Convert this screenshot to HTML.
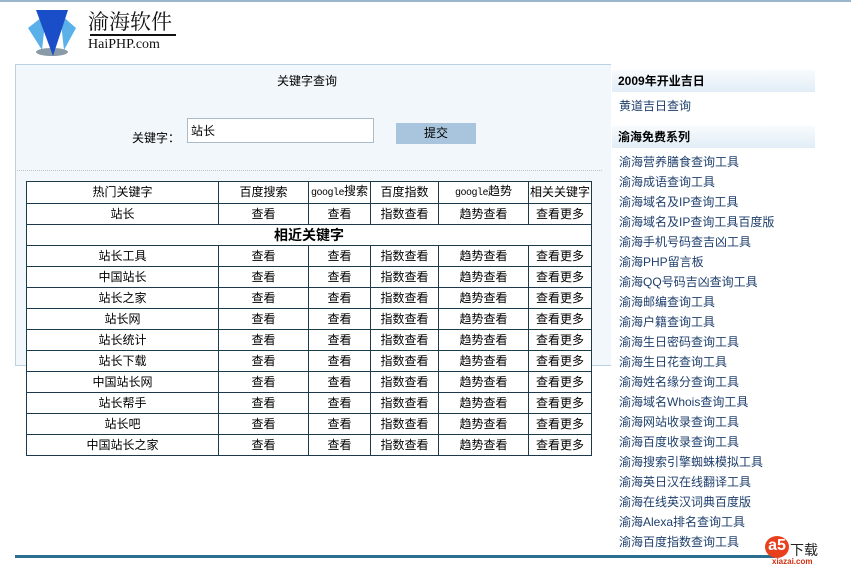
<!DOCTYPE html>
<html><head><meta charset="utf-8">
<style>
*{margin:0;padding:0;box-sizing:border-box}
body{width:851px;height:571px;background:#fff;position:relative;overflow:hidden;font-family:"Liberation Sans","Noto Sans CJK SC",sans-serif;font-size:12px;color:#000}
.a{position:absolute}
#panel{left:15px;top:64px;width:596px;height:302px;background:#f2f7fb;border:1px solid #bcd2e2;border-right:none}
table{position:absolute;left:26px;top:181px;border-collapse:separate;border-spacing:0;background:#fff;border-left:1px solid #1c3a4c;border-top:1px solid #1c3a4c;table-layout:fixed;width:566px}
td{border-right:1px solid #1c3a4c;border-bottom:1px solid #1c3a4c;height:21px;text-align:center;font-size:12px;line-height:19px;padding:0;white-space:nowrap;overflow:hidden}
.g{font-family:"Liberation Mono",monospace;font-size:10px;letter-spacing:-0.5px}
.sh{left:612px;width:203px;height:22px;background:linear-gradient(#f8fbfd,#e2edf7);font-weight:bold;font-size:12px;line-height:22px;padding-left:6px;color:#000}
.lk{left:619px;color:#1e3f6c;font-size:12px;line-height:20px}
</style></head><body>
<div class="a" style="left:0;top:0;width:851px;height:2px;background:#9ab5cc"></div>
<svg class="a" style="left:24px;top:6px" width="60" height="52" viewBox="0 0 60 52">
<ellipse cx="28" cy="46" rx="16" ry="4" fill="#8a9ba8"/>
<polygon points="4,22 22,8 18,44" fill="#5ab0e8"/>
<polygon points="52,22 36,8 40,44" fill="#5ab0e8"/>
<polygon points="12,4 44,4 29,50" fill="#1a4ec8"/>
</svg>
<div class="a" style="left:88px;top:9px;font-family:'Noto Serif CJK SC',serif;font-size:21px;line-height:24px;color:#111">渝海软件</div>
<div class="a" style="left:90px;top:34px;width:86px;height:2px;background:#111"></div>
<div class="a" style="left:88px;top:37px;font-family:'Liberation Serif',serif;font-size:14px;color:#111">HaiPHP.com</div>
<div id="panel" class="a"></div>
<div class="a" style="left:277px;top:72px">关键字查询</div>
<div class="a" style="left:132px;top:129px">关键字：</div>
<div class="a" style="left:187px;top:118px;width:187px;height:25px;background:#fff;border:1px solid #aabccb;padding:3px 3px">站长</div>
<div class="a" style="left:396px;top:123px;width:80px;height:21px;background:#a9c5dd;text-align:center;line-height:21px">提交</div>
<div class="a" style="left:15px;top:170px;width:587px;border-top:1px dotted #b8c6d0"></div>
<table>
<colgroup><col style="width:192px"><col style="width:90px"><col style="width:62px"><col style="width:68px"><col style="width:90px"><col style="width:63px"></colgroup>
<tr><td>热门关键字</td><td>百度搜索</td><td><span class="g">google</span>搜索</td><td>百度指数</td><td><span class="g">google</span>趋势</td><td>相关关键字</td></tr>
<tr><td>站长</td><td>查看</td><td>查看</td><td>指数查看</td><td>趋势查看</td><td>查看更多</td></tr>
<tr><td colspan="6" style="font-weight:bold;font-size:14px">相近关键字</td></tr>
<tr><td>站长工具</td><td>查看</td><td>查看</td><td>指数查看</td><td>趋势查看</td><td>查看更多</td></tr>
<tr><td>中国站长</td><td>查看</td><td>查看</td><td>指数查看</td><td>趋势查看</td><td>查看更多</td></tr>
<tr><td>站长之家</td><td>查看</td><td>查看</td><td>指数查看</td><td>趋势查看</td><td>查看更多</td></tr>
<tr><td>站长网</td><td>查看</td><td>查看</td><td>指数查看</td><td>趋势查看</td><td>查看更多</td></tr>
<tr><td>站长统计</td><td>查看</td><td>查看</td><td>指数查看</td><td>趋势查看</td><td>查看更多</td></tr>
<tr><td>站长下载</td><td>查看</td><td>查看</td><td>指数查看</td><td>趋势查看</td><td>查看更多</td></tr>
<tr><td>中国站长网</td><td>查看</td><td>查看</td><td>指数查看</td><td>趋势查看</td><td>查看更多</td></tr>
<tr><td>站长帮手</td><td>查看</td><td>查看</td><td>指数查看</td><td>趋势查看</td><td>查看更多</td></tr>
<tr><td>站长吧</td><td>查看</td><td>查看</td><td>指数查看</td><td>趋势查看</td><td>查看更多</td></tr>
<tr><td>中国站长之家</td><td>查看</td><td>查看</td><td>指数查看</td><td>趋势查看</td><td>查看更多</td></tr>
</table>
<div class="a sh" style="top:70px">2009年开业吉日</div>
<div class="a lk" style="top:96px">黄道吉日查询</div>
<div class="a sh" style="top:126px">渝海免费系列</div>
<div class="a lk" style="top:152px">渝海营养膳食查询工具<br>渝海成语查询工具<br>渝海域名及IP查询工具<br>渝海域名及IP查询工具百度版<br>渝海手机号码查吉凶工具<br>渝海PHP留言板<br>渝海QQ号码吉凶查询工具<br>渝海邮编查询工具<br>渝海户籍查询工具<br>渝海生日密码查询工具<br>渝海生日花查询工具<br>渝海姓名缘分查询工具<br>渝海域名Whois查询工具<br>渝海网站收录查询工具<br>渝海百度收录查询工具<br>渝海搜索引擎蜘蛛模拟工具<br>渝海英日汉在线翻译工具<br>渝海在线英汉词典百度版<br>渝海Alexa排名查询工具<br>渝海百度指数查询工具</div>
<div class="a" style="left:15px;top:555px;width:760px;height:3px;background:#2a6f8f"></div>
<div class="a" style="left:765px;top:536px;width:24px;height:22px;border-radius:50%;background:#e8401c;color:#fff;font-weight:bold;font-size:16px;line-height:20px;text-align:center">a5</div>
<div class="a" style="left:790px;top:540px;font-size:14px;color:#222">下载</div>
<div class="a" style="left:772px;top:557px;font-size:8px;color:#d03010;font-weight:bold">xiazai.com</div>
</body></html>
